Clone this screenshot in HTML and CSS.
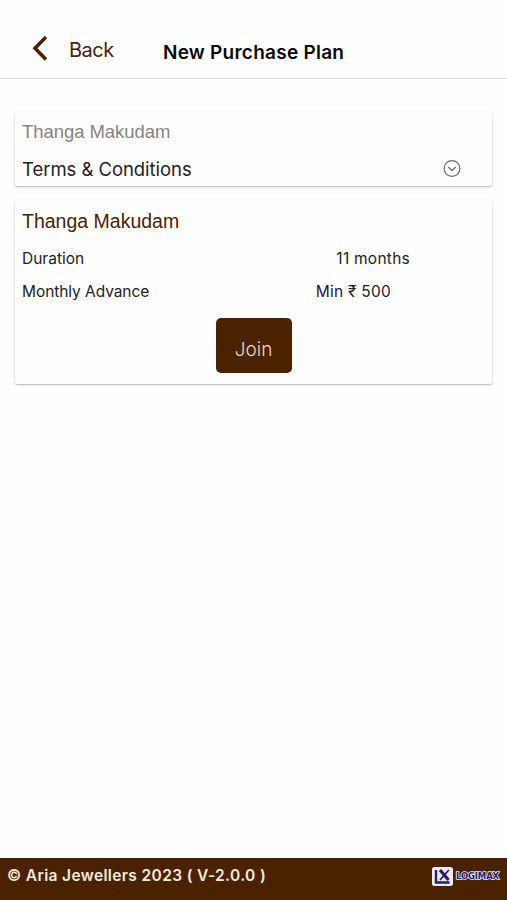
FILE: index.html
```html
<!doctype html>
<html lang="en">
<head>
	<meta charset="utf-8">
	<meta name="viewport" content="width=device-width, initial-scale=1">
	<title>New Purchase Plan</title>
	<link rel="stylesheet" href="styles.css">
</head>
<body>
	<div class="page">
		<header class="topbar">
			<a class="back">
				<svg class="chevron" width="18" height="28" viewBox="0 0 18 28"><path d="M15 3 4 14.2 15 25.5" fill="none" stroke="#4b2200" stroke-width="3.5"/></svg>
				<span>Back</span>
			</a>
			<h1 class="title">New Purchase Plan</h1>
		</header>
		<main class="content">
			<div class="card terms">
				<div class="plan">Thanga Makudam</div>
				<div class="terms-row">
					<span>Terms &amp; Conditions</span>
					<svg width="18" height="18" viewBox="0 0 18 18" fill="none" stroke="#6c6c6c" stroke-width="1.2"><circle cx="9" cy="8.5" r="7.9"/><path d="M5.2 7 9 10.5 12.8 7" stroke-width="1.4"/></svg>
				</div>
			</div>
			<div class="card details">
				<h2 class="plan-name">Thanga Makudam</h2>
				<div class="row">
					<span>Duration</span>
					<span class="duration">11 months</span>
				</div>
				<div class="row">
					<span class="advance">Monthly Advance</span>
					<span class="amount">Min ₹ 500</span>
				</div>
				<button type="button" class="join">Join</button>
			</div>
		</main>
		<footer class="footer">
			<span class="copy">© Aria Jewellers 2023 ( V-2.0.0 )</span>
			<div class="logo">
				<svg width="21" height="19" viewBox="0 0 21 19"><rect width="21" height="19" rx="2.5" fill="#eee9f2"/><path d="M4 3v12.5h13.5" fill="none" stroke="#24206b" stroke-width="2.4"/><path d="m8 3 8.5 10" fill="none" stroke="#24206b" stroke-width="3.2"/><path d="M16.8 3 8 13" fill="none" stroke="#24206b" stroke-width="1.8"/></svg>
				<span class="logo-name">LOGIMAX</span>
			</div>
		</footer>
	</div>
</body>
</html>
```
FILE: styles.css
```css
body{
	margin: 0;
	background: #fefefe;
	font-family: Inter, "Liberation Sans", sans-serif;
	color: #222;
}
.page{
	display: flex;
	flex-direction: column;
	height: 100vh;
}
.topbar{
	box-sizing: border-box;
	height: 79px;
	padding: 26px 0 0 31px;
	display: flex;
	align-items: flex-start;
	border-bottom: 1px solid #dedede;
}
.back{
	display: flex;
	width: 132px;
	font-size: 20px;
	line-height: 48px;
	letter-spacing: -0.5px;
	color: #4b2200;
}
.chevron{
	margin: 8px 20px 0 0;
}
.title{
	margin: 14px 0 0;
	font-size: 19px;
	line-height: 26px;
	font-weight: 600;
	letter-spacing: 0.25px;
	color: #080808;
}
.content{
	flex: 1;
	padding: 33px 15px 0;
}
.card{
	box-sizing: border-box;
	padding: 0 7px;
	border-radius: 2px;
	background: #fefefe;
	box-shadow: 0 1px 2px rgba(0,0,0,0.3);
}
.terms{
	height: 74px;
	margin-bottom: 14px;
	padding-top: 7px;
}
.plan{
	font: 18.5px/26px "Liberation Sans", sans-serif;
	letter-spacing: -0.06px;
	color: #858585;
}
.terms-row{
	display: flex;
	justify-content: space-between;
	align-items: center;
	height: 47px;
	padding-right: 24px;
	font-size: 18.5px;
	letter-spacing: -0.05px;
}
.details{
	height: 184px;
	padding-top: 7px;
}
.plan-name{
	margin: 0 0 11px;
	font: 19.5px/28px "Liberation Sans", sans-serif;
	color: #4b2200;
}
.row{
	display: flex;
	height: 33px;
	line-height: 25px;
	font-size: 15.5px;
}
.advance{
	letter-spacing: -0.07px;
}
.duration{
	margin-left: auto;
	margin-right: 75px;
	letter-spacing: 0.25px;
}
.amount{
	margin-left: auto;
	margin-right: 94px;
	letter-spacing: 0.25px;
}
.join{
	display: block;
	width: 76px;
	height: 55px;
	margin: 6px auto 0;
	padding: 8px 0 0;
	border: 0;
	border-radius: 5px;
	background: #4b2200;
	color: #e9d6c5;
	font: 300 19px Inter, sans-serif;
}
.footer{
	box-sizing: border-box;
	height: 42px;
	padding: 0 8px 6px 7px;
	display: flex;
	justify-content: space-between;
	align-items: center;
	background: #4b2200;
}
.copy{
	margin-top: -2px;
	font-size: 15.5px;
	font-weight: 600;
	letter-spacing: 0.37px;
	color: #f7e9dc;
}
.logo{
	display: flex;
	align-items: center;
	gap: 3px;
}
.logo-name{
	font: bold 8.5px "DejaVu Sans", sans-serif;
	letter-spacing: -0.15px;
	color: #24206b;
	-webkit-text-stroke: 1.6px #eee9f2;
	paint-order: stroke fill;
}
```
